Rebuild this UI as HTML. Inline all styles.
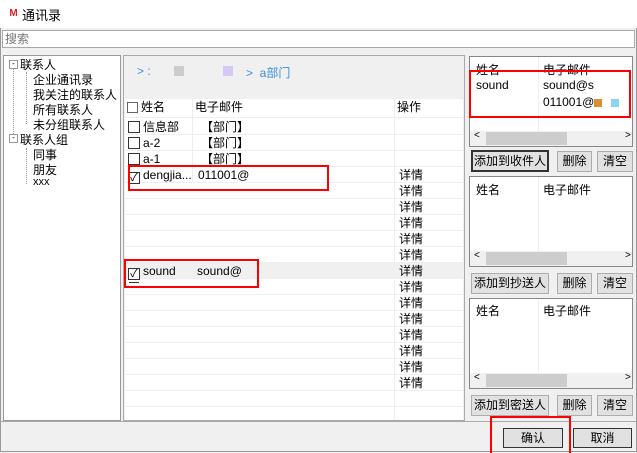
<!DOCTYPE html>
<html><head><meta charset="utf-8"><style>
*{box-sizing:border-box;margin:0;padding:0}
body{width:637px;height:452px;background:#f0f0f0;font-family:"Liberation Sans","Noto Sans CJK SC",sans-serif;font-size:12px;color:#000;position:relative;overflow:hidden}
.a{position:absolute}
.win{left:0;top:0;width:637px;height:452px;border:1px solid #999;border-top:none}
.title{left:0;top:0;width:637px;height:28px;background:#fff}
.btn{position:absolute;background:#e1e1e1;border:1px solid #adadad;text-align:center;font-size:12px;line-height:19px}
.box{position:absolute;background:#fff;border:1px solid #828790}
.red{position:absolute;border:2px solid #f00}
.cb{display:inline-block;width:12px;height:12px;border:1px solid #333;vertical-align:-2px;margin-right:3px;background:#fff;font-size:11px;line-height:10px;text-align:center}
.row{position:absolute;left:125px;width:338px;height:16px;border-bottom:1px solid #eee;line-height:16px}
.row>span{position:absolute;white-space:nowrap}
</style></head><body>
<div class="a win"></div>
<div class="a title"></div>
<div class="a" style="left:7px;top:7px;width:13px;height:13px;border-radius:50%;background:#fff;color:#e02020;font-weight:bold;font-size:10px;line-height:13px;text-align:center">M</div>
<div class="a" style="left:22px;top:5px;font-size:13px">通讯录</div>
<div class="a" style="left:2px;top:30px;width:633px;height:18px;background:#fff;border:1px solid #aaa;color:#777;line-height:16px;padding-left:2px">搜索</div>

<!-- left tree -->
<div class="box" style="left:3px;top:55px;width:118px;height:366px;border-color:#999"></div>
<div class="a" style="left:13px;top:64px;width:1px;height:74px;border-left:1px dotted #999"></div>
<div class="a" style="left:26px;top:72px;width:1px;height:52px;border-left:1px dotted #999"></div>
<div class="a" style="left:26px;top:148px;width:1px;height:36px;border-left:1px dotted #999"></div>
<div class="a" style="left:9px;top:60px;width:9px;height:9px;border:1px solid #999;background:#fff;font-size:8px;line-height:6px;text-align:center">-</div>
<div class="a" style="left:9px;top:134px;width:9px;height:9px;border:1px solid #999;background:#fff;font-size:8px;line-height:6px;text-align:center">-</div>
<div class="a" style="left:20px;top:56px">联系人</div>
<div class="a" style="left:33px;top:71px">企业通讯录</div>
<div class="a" style="left:33px;top:86px">我关注的联系人</div>
<div class="a" style="left:33px;top:101px">所有联系人</div>
<div class="a" style="left:33px;top:116px">未分组联系人</div>
<div class="a" style="left:20px;top:131px">联系人组</div>
<div class="a" style="left:33px;top:146px">同事</div>
<div class="a" style="left:33px;top:161px">朋友</div>
<div class="a" style="left:33px;top:176px;font-size:11px">xxx</div>

<!-- middle -->
<div class="a" style="left:123px;top:55px;width:342px;height:366px;border:1px solid #aaa"></div>
<div class="a" style="left:137px;top:64px;color:#3b8fe0">&gt; :</div>
<div class="a" style="left:174px;top:66px;width:10px;height:10px;background:#ccc"></div>
<div class="a" style="left:223px;top:66px;width:10px;height:10px;background:#d8c8f4"></div>
<div class="a" style="left:246px;top:64px;color:#3b8fe0">&gt;&nbsp; a部门</div>
<div class="a" style="left:125px;top:99px;width:338px;height:321px;background:#fff"></div>
<div class="a" style="left:192px;top:99px;width:1px;height:84px;background:#eee"></div>
<div class="a" style="left:394px;top:99px;width:1px;height:321px;background:#eee"></div>
<div class="row" style="top:99px;height:19px;line-height:17px"><span style="left:2px"><span class="cb" style="width:11px;height:11px;border-color:#666"></span>姓名</span><span style="left:70px">电子邮件</span><span style="left:272px">操作</span></div>
<div class="row" style="top:119px"><span style="left:3px"><span class="cb"></span>信息部</span><span style="left:76px">【部门】</span></div>
<div class="row" style="top:135px"><span style="left:3px"><span class="cb"></span>a-2</span><span style="left:76px">【部门】</span></div>
<div class="row" style="top:151px"><span style="left:3px"><span class="cb"></span>a-1</span><span style="left:76px">【部门】</span></div>
<div class="row" style="top:167px"><span style="left:3px"><span class="cb">✓</span>dengjia...</span><span style="left:73px">011001@</span><span style="left:274px">详情</span></div>
<div class="row" style="top:183px"><span style="left:274px">详情</span></div>
<div class="row" style="top:199px"><span style="left:274px">详情</span></div>
<div class="row" style="top:215px"><span style="left:274px">详情</span></div>
<div class="row" style="top:231px"><span style="left:274px">详情</span></div>
<div class="row" style="top:247px"><span style="left:274px">详情</span></div>
<div class="row" style="top:263px;background:#f0f0f0"><span style="left:3px"><span class="cb">✓</span>sound</span><span style="left:72px">sound@</span><span style="left:274px">详情</span></div>
<div class="row" style="top:279px"><span style="left:274px">详情</span></div>
<div class="row" style="top:295px"><span style="left:274px">详情</span></div>
<div class="row" style="top:311px"><span style="left:274px">详情</span></div>
<div class="row" style="top:327px"><span style="left:274px">详情</span></div>
<div class="row" style="top:343px"><span style="left:274px">详情</span></div>
<div class="row" style="top:359px"><span style="left:274px">详情</span></div>
<div class="row" style="top:375px"><span style="left:274px">详情</span></div>
<div class="row" style="top:391px"></div>
<div class="a" style="left:129px;top:282px;width:10px;height:1px;background:#333"></div>

<!-- right -->
<div class="box" style="left:469px;top:56px;width:164px;height:91px"></div>
<div class="a" style="left:538px;top:57px;width:1px;height:75px;background:#eee"></div>
<div class="a" style="left:476px;top:61px">姓名</div><div class="a" style="left:543px;top:61px">电子邮件</div>
<div class="a" style="left:476px;top:78px">sound</div><div class="a" style="left:543px;top:78px">sound@s</div>
<div class="a" style="left:543px;top:95px">011001@</div>
<div class="a" style="left:594px;top:99px;width:8px;height:8px;background:#d89030"></div>
<div class="a" style="left:611px;top:99px;width:8px;height:8px;background:#8cd4f4"></div>
<div class="a" style="left:470px;top:131px;width:162px;height:15px;background:#f0f0f0"></div>
<div class="a" style="left:486px;top:132px;width:81px;height:13px;background:#cdcdcd"></div>
<div class="a" style="left:474px;top:130px;font-size:10px">&lt;</div><div class="a" style="left:625px;top:130px;font-size:10px">&gt;</div>
<div class="btn" style="left:471px;top:150px;width:78px;height:22px;border:2px solid #333">添加到收件人</div>
<div class="btn" style="left:557px;top:151px;width:35px;height:21px">删除</div>
<div class="btn" style="left:597px;top:151px;width:36px;height:21px">清空</div>

<div class="box" style="left:469px;top:176px;width:164px;height:91px"></div>
<div class="a" style="left:538px;top:177px;width:1px;height:74px;background:#eee"></div>
<div class="a" style="left:476px;top:181px">姓名</div><div class="a" style="left:543px;top:181px">电子邮件</div>
<div class="a" style="left:470px;top:251px;width:162px;height:15px;background:#f0f0f0"></div>
<div class="a" style="left:486px;top:252px;width:81px;height:13px;background:#cdcdcd"></div>
<div class="a" style="left:474px;top:250px;font-size:10px">&lt;</div><div class="a" style="left:625px;top:250px;font-size:10px">&gt;</div>
<div class="btn" style="left:471px;top:273px;width:78px;height:21px">添加到抄送人</div>
<div class="btn" style="left:557px;top:273px;width:35px;height:21px">删除</div>
<div class="btn" style="left:597px;top:273px;width:36px;height:21px">清空</div>

<div class="box" style="left:469px;top:298px;width:164px;height:91px"></div>
<div class="a" style="left:538px;top:299px;width:1px;height:74px;background:#eee"></div>
<div class="a" style="left:476px;top:302px">姓名</div><div class="a" style="left:543px;top:302px">电子邮件</div>
<div class="a" style="left:470px;top:373px;width:162px;height:15px;background:#f0f0f0"></div>
<div class="a" style="left:486px;top:374px;width:81px;height:13px;background:#cdcdcd"></div>
<div class="a" style="left:474px;top:372px;font-size:10px">&lt;</div><div class="a" style="left:625px;top:372px;font-size:10px">&gt;</div>
<div class="btn" style="left:471px;top:395px;width:78px;height:21px">添加到密送人</div>
<div class="btn" style="left:557px;top:395px;width:35px;height:21px">删除</div>
<div class="btn" style="left:597px;top:395px;width:36px;height:21px">清空</div>

<div class="a" style="left:0;top:421px;width:637px;height:1px;background:#aaa"></div>
<div class="btn" style="left:503px;top:428px;width:60px;height:20px;border-color:#333">确认</div>
<div class="btn" style="left:573px;top:428px;width:59px;height:20px;border-color:#333">取消</div>

<div class="red" style="left:128px;top:165px;width:201px;height:26px"></div>
<div class="red" style="left:124px;top:259px;width:135px;height:29px"></div>
<div class="red" style="left:469px;top:70px;width:162px;height:48px"></div>
<div class="red" style="left:490px;top:416px;width:81px;height:37px;border-bottom:none"></div>
</body></html>
